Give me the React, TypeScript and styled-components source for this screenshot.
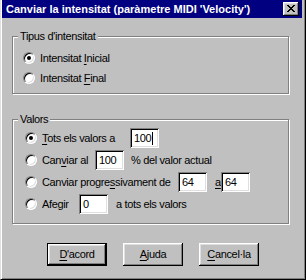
import React from "react";
import styled, { createGlobalStyle } from "styled-components";

const GlobalStyle = createGlobalStyle`
  html, body {
    margin: 0;
    padding: 0;
    background: #c0c0c0;
  }
  body {
    font-family: "Liberation Sans", Arial, sans-serif;
    font-size: 11px;
    color: #000;
  }
`;

const Window = styled.div`
  box-sizing: border-box;
  width: 306px;
  height: 280px;
  background: #c0c0c0;
  border-left: 1px solid #dfdfdf;
  border-right: 1px solid #000;
  border-bottom: 1px solid #000;
  box-shadow: inset 1px 0 #fff, inset -1px -1px #808080;
  padding: 0 3px 3px 1px;
  display: flex;
  flex-direction: column;
  letter-spacing: -0.35px;
`;

const TitleBar = styled.div`
  height: 18px;
  background: #000080;
  color: #fff;
  display: flex;
  align-items: center;
  justify-content: space-between;
  padding: 0 3px 0 4px;
`;

const TitleText = styled.span`
  font-weight: bold;
  font-size: 11px;
  letter-spacing: 0;
  white-space: nowrap;
`;

const CloseButton = styled.div`
  width: 16px;
  height: 14px;
  background: #c0c0c0;
  box-shadow: inset -1px -1px #000, inset 1px 1px #fff, inset -2px -2px #808080,
    inset 2px 2px #dfdfdf;
  display: flex;
  align-items: center;
  justify-content: center;
  svg {
    margin: 0 1px 1px 0;
  }
`;

const Body = styled.div`
  display: flex;
  flex-direction: column;
  padding: 18px 0 0 10px;
`;

const Group = styled.div<{ $h: number; $top?: number }>`
  position: relative;
  box-sizing: border-box;
  width: 277px;
  height: ${(p) => p.$h}px;
  margin-top: ${(p) => p.$top ?? 0}px;
  border: 1px solid #808080;
  box-shadow: inset 1px 1px #fff, 1px 1px #fff;
  display: flex;
  flex-direction: column;
`;

const Caption = styled.span`
  position: absolute;
  top: -7px;
  left: 5px;
  padding: 0 2px;
  line-height: 13px;
  background: #c0c0c0;
`;

const Options = styled.div<{ $pt: number; $pl: number; $row: number }>`
  display: flex;
  flex-direction: column;
  padding: ${(p) => p.$pt}px 0 0 ${(p) => p.$pl}px;
  & > * {
    height: ${(p) => p.$row}px;
  }
`;

const Option = styled.div`
  display: flex;
  align-items: center;
  gap: 5px;
  white-space: nowrap;
`;

const Radio = styled.span<{ $on?: boolean }>`
  position: relative;
  box-sizing: border-box;
  flex: none;
  width: 12px;
  height: 12px;
  border-radius: 50%;
  border: 1px solid;
  border-color: #808080 #fff #fff #808080;
  background: #fff;
  box-shadow: inset 1px 1px #000, inset -1px -1px #dfdfdf;
  &::after {
    content: "";
    display: ${(p) => (p.$on ? "block" : "none")};
    position: absolute;
    left: 3px;
    top: 3px;
    width: 4px;
    height: 4px;
    border-radius: 50%;
    background: #000;
  }
`;

const Label = styled.span<{ $w?: number; $ml?: number }>`
  display: inline-block;
  width: ${(p) => (p.$w ? `${p.$w}px` : "auto")};
  margin-left: ${(p) => p.$ml ?? 0}px;
`;

const Key = styled.u`
  text-decoration-thickness: 1px;
  text-underline-offset: 2px;
`;

const Field = styled.div`
  box-sizing: border-box;
  flex: none;
  width: 29px;
  height: 20px;
  background: #fff;
  box-shadow: inset 1px 1px #808080, inset -1px -1px #fff, inset 2px 2px #000,
    inset -2px -2px #dfdfdf;
  padding: 0 0 0 4px;
  display: flex;
  align-items: center;
`;

const Caret = styled.span`
  display: inline-block;
  width: 1px;
  height: 13px;
  margin-left: 1px;
  background: #000;
`;

const Inline = styled.div`
  display: flex;
  align-items: center;
`;

const Buttons = styled.div`
  display: flex;
  gap: 16px;
  padding: 19px 0 0 45px;
`;

const Button = styled.div<{ $default?: boolean }>`
  box-sizing: border-box;
  width: 60px;
  height: 23px;
  background: #c0c0c0;
  border: ${(p) => (p.$default ? "1px solid #000" : "none")};
  box-shadow: inset -1px -1px #000, inset 1px 1px #fff, inset -2px -2px #808080,
    inset 2px 2px #dfdfdf;
  display: flex;
  align-items: center;
  justify-content: center;
  padding-bottom: 1px;
`;

const CloseGlyph = () => (
  <svg width="8" height="7" viewBox="0 0 8 7" shapeRendering="crispEdges">
    <path
      d="M0 0h2v1H0zM6 0h2v1H6zM1 1h2v1H1zM5 1h2v1H5zM2 2h4v1H2zM3 3h2v1H3zM2 4h4v1H2zM1 5h2v1H1zM5 5h2v1H5zM0 6h2v1H0zM6 6h2v1H6z"
      fill="#000"
    />
  </svg>
);

export default function App() {
  return (
    <>
      <GlobalStyle />
      <Window>
        <TitleBar>
          <TitleText>Canviar la intensitat (paràmetre MIDI 'Velocity')</TitleText>
          <CloseButton>
            <CloseGlyph />
          </CloseButton>
        </TitleBar>
        <Body>
          <Group $h={58}>
            <Caption>Tipus d'intensitat</Caption>
            <Options $pt={11} $pl={10} $row={20}>
              <Option>
                <Radio $on />
                <Label>
                  Intensitat <Key>I</Key>nicial
                </Label>
              </Option>
              <Option>
                <Radio />
                <Label>
                  Intensitat <Key>F</Key>inal
                </Label>
              </Option>
            </Options>
          </Group>
          <Group $h={105} $top={25}>
            <Caption>Valors</Caption>
            <Options $pt={7} $pl={12} $row={22}>
              <Option>
                <Radio $on />
                <Label $w={83}>
                  <Key>T</Key>ots els valors a
                </Label>
                <Field>
                  100
                  <Caret />
                </Field>
              </Option>
              <Option>
                <Radio />
                <Inline>
                  <Label $w={53}>
                    Can<Key>v</Key>iar al
                  </Label>
                  <Field>100</Field>
                  <Label $ml={7}>% del valor actual</Label>
                </Inline>
              </Option>
              <Option>
                <Radio />
                <Inline>
                  <Label $w={136}>
                    Canviar progre<Key>s</Key>sivament de
                  </Label>
                  <Field>64</Field>
                  <Label $w={6} $ml={8}>
                    <Key>a</Key>
                  </Label>
                  <Field>64</Field>
                </Inline>
              </Option>
              <Option>
                <Radio />
                <Inline>
                  <Label $w={37}>Afegir</Label>
                  <Field>0</Field>
                  <Label $ml={8}>a tots els valors</Label>
                </Inline>
              </Option>
            </Options>
          </Group>
        </Body>
        <Buttons>
          <Button $default>
            <span>
              <Key>D</Key>'acord
            </span>
          </Button>
          <Button>
            <span>
              <Key>A</Key>juda
            </span>
          </Button>
          <Button>
            <span>
              <Key>C</Key>ancel·la
            </span>
          </Button>
        </Buttons>
      </Window>
    </>
  );
}
